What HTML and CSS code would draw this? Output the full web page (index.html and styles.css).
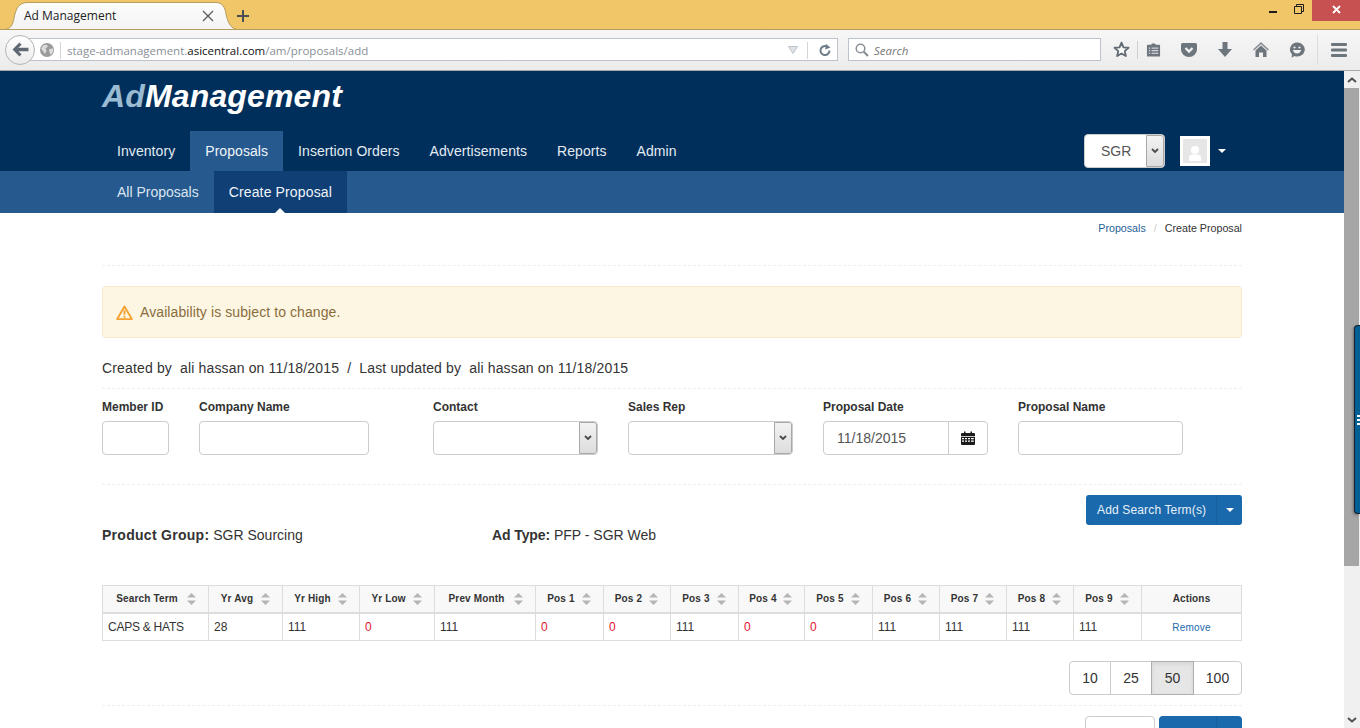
FILE: index.html
```html
<!DOCTYPE html>
<html lang="en">
<head>
<meta charset="utf-8">
<title>Ad Management</title>
<link rel="stylesheet" href="styles.css">
</head>
<body>
<div class="browser">
  <div class="tabstrip">
    <div class="tab">
      <svg class="tabshape" viewBox="0 0 236 30" width="236" height="30">
        <defs><linearGradient id="tabg" x1="0" y1="0" x2="0" y2="1"><stop offset="0" stop-color="#fdfdfd"/><stop offset="1" stop-color="#f3f3f3"/></linearGradient></defs>
        <path d="M0 29.500C7 29.500 9 24 10 18C12 8 15 2.500 24 2.500L212 2.500C218 2.500 221 7 222 14C224 24 228 29.500 234 29.500Z" fill="url(#tabg)" stroke="#b39c5e"/>
      </svg>
      <span class="tabtitle">Ad Management</span>
      <svg class="tabclose" viewBox="0 0 12 12" width="12" height="12"><path d="M1 1L11 11M11 1L1 11" stroke="#5a5a5a" stroke-width="1.300" fill="none"/></svg>
    </div>
    <svg class="newtab" viewBox="0 0 12 12" width="12" height="12"><path d="M6 0V12M0 6H12" stroke="#4a4f55" stroke-width="2" fill="none"/></svg>
    <div class="winctrls">
      <span class="winbtn winmin"><svg viewBox="0 0 8 2" width="8" height="2"><rect width="8" height="2" fill="#1d1d1d"/></svg></span>
      <span class="winbtn winrestore"><svg viewBox="0 0 10 10" width="10" height="10"><path d="M0.500 2.500H7.500V9.500H0.500ZM2.500 2.500V0.500H9.500V7.500H7.500" fill="none" stroke="#1d1d1d"/></svg></span>
      <span class="winbtn winclose"><svg viewBox="0 0 9 9" width="9" height="9"><path d="M1 1L8 8M8 1L1 8" stroke="#fff" stroke-width="1.800" fill="none"/></svg></span>
    </div>
  </div>
  <div class="toolbar">
    <span class="backbtn"><svg viewBox="0 0 16 14" width="17" height="15"><path d="M7 0.500L0.500 7L7 13.500L9 11.500L6 8.700H15.500V5.300H6L9 2.500Z" fill="#5f6973"/></svg></span>
    <div class="urlbar">
      <svg class="globe" viewBox="0 0 14 14" width="14" height="14"><circle cx="7" cy="7" r="7" fill="#9a9a9a"/><path d="M3 2.500L6.500 1.500L8 3.500L5.500 5.500L6.500 8L5 11L3 8L1.200 6ZM9 6L13 5.500L13 9L10.500 12L9.500 9Z" fill="#dcdcdc"/></svg>
      <span class="urltext">stage-admanagement.<b class="domain">asicentral.com</b>/am/proposals/add</span>
      <svg class="urldrop" viewBox="0 0 10 8" width="10" height="8"><path d="M0.500 0.500H9.500L5 7.500Z" fill="#dfe3e7" stroke="#bcc3ca"/></svg>
      <span class="reload"><svg viewBox="0 0 12 12" width="12" height="12"><path d="M10.500 6.500A4.500 4.500 0 1 1 7 2.200" fill="none" stroke="#6f7d8a" stroke-width="2"/><path d="M6.500 0V5.500L11.500 2.800Z" fill="#6f7d8a" transform="rotate(8 7 3)"/></svg></span>
    </div>
    <div class="searchbar">
      <svg viewBox="0 0 14 14" width="14" height="14"><circle cx="5.500" cy="5.500" r="4.300" fill="none" stroke="#8a8f95" stroke-width="1.500"/><path d="M8.800 8.800L13 13" stroke="#8a8f95" stroke-width="2.200"/></svg>
      <span class="searchtext">Search</span>
    </div>
    <span class="tool toolstar"><svg viewBox="0 0 18 18" width="17" height="17"><path d="M9 1.800L11.100 6.700L16.400 7.200L12.400 10.700L13.600 15.900L9 13.200L4.400 15.900L5.600 10.700L1.600 7.200L6.900 6.700Z" fill="#fafafa" stroke="#636c75" stroke-width="2" stroke-linejoin="round"/></svg></span>
    <span class="tool toolclip"><svg viewBox="0 0 16 16" width="15" height="16"><path d="M2 2.500H5.500L6.500 1H9.500L10.500 2.500H14Q15 2.500 15 3.500V14Q15 15 14 15H2Q1 15 1 14V3.500Q1 2.500 2 2.500Z" fill="#6d757d"/><path d="M3 6H4.500M6 6H13M3 8.700H4.500M6 8.700H13M3 11.400H4.500M6 11.400H13" stroke="#f2f2f2"/></svg></span>
    <span class="tool"><svg viewBox="0 0 16 14" width="16" height="14"><path d="M1.500 0H14.500Q16 0 16 1.500V6.500A8 7.500 0 0 1 0 6.500V1.500Q0 0 1.500 0Z" fill="#6d757d"/><path d="M4.500 5L8 8.500L11.500 5" fill="none" stroke="#f2f2f2" stroke-width="2.300"/></svg></span>
    <span class="tool"><svg viewBox="0 0 14 16" width="14" height="16"><path d="M4.500 0H9.500V7H14L7 15L0 7H4.500Z" fill="#6d757d"/></svg></span>
    <span class="tool"><svg viewBox="0 0 16 15" width="16" height="15"><path d="M8 0L16 7.500L14.800 8.500L8 2.200L1.200 8.500L0 7.500Z" fill="#8a9097"/><path d="M8 3.500L13.500 8.500V15H10V10.500H6V15H2.500V8.500Z" fill="#6d757d"/></svg></span>
    <span class="tool"><svg viewBox="0 0 16 16" width="16" height="16"><path d="M8 0.500A7.500 7 0 1 1 5.500 14L2.500 15.800L3 12.300A7.500 7 0 0 1 8 0.500Z" fill="#6d757d"/><circle cx="5.500" cy="5.500" r="1.100" fill="#f2f2f2"/><circle cx="10.500" cy="5.500" r="1.100" fill="#f2f2f2"/><path d="M3.800 8H12.200Q11 11.500 8 11.500Q5 11.500 3.800 8Z" fill="#f2f2f2"/></svg></span>
    <span class="tool toolmenu"><svg viewBox="0 0 16 14" width="16" height="14"><path d="M1 0H15Q16 0 16 1V2Q16 3 15 3H1Q0 3 0 2V1Q0 0 1 0ZM1 5.500H15Q16 5.500 16 6.500V7.500Q16 8.500 15 8.500H1Q0 8.500 0 7.500V6.500Q0 5.500 1 5.500ZM1 11H15Q16 11 16 12V13Q16 14 15 14H1Q0 14 0 13V12Q0 11 1 11Z" fill="#6d757d"/></svg></span>
  </div>
</div>

<div class="viewport">
  <div class="page">
    <header class="siteheader">
      <div class="container">
        <div class="logo"><span class="logo-ad">Ad</span>Management</div>
        <div class="navrow">
          <nav class="mainnav">
            <a class="navlink">Inventory</a>
            <a class="navlink navactive">Proposals</a>
            <a class="navlink">Insertion Orders</a>
            <a class="navlink">Advertisements</a>
            <a class="navlink">Reports</a>
            <a class="navlink">Admin</a>
          </nav>
          <div class="navright">
            <div class="select sgr"><span class="selval">SGR</span><span class="selarrow"><svg viewBox="0 0 8 6" width="8" height="6"><path d="M1 1L4 4L7 1" fill="none" stroke="#4a4a4a" stroke-width="1.800"/></svg></span></div>
            <span class="avatar"><svg viewBox="0 0 24 24" width="24" height="24"><rect width="24" height="24" fill="#e6e6e6"/><circle cx="12" cy="11" r="4" fill="#fff"/><path d="M6 22V18.500Q6 15.500 10 15.500H14Q18 15.500 18 18.500V22Z" fill="#fff"/></svg></span>
            <span class="caret"></span>
          </div>
        </div>
      </div>
    </header>
    <div class="subnavbar">
      <div class="container subnav">
        <a class="sublink">All Proposals</a>
        <a class="sublink subactive">Create Proposal</a>
      </div>
    </div>

    <main class="container">
      <div class="crumbs"><a class="link crumblink">Proposals</a><span class="crumbsep">/</span><span>Create Proposal</span></div>
      <div class="alert">
        <svg viewBox="0 0 18 16" width="17" height="15"><path d="M9 1.500L16.800 15H1.200Z" fill="none" stroke="#f5a232" stroke-width="2" stroke-linejoin="round"/><path d="M9 5.500V10.500M9 11.500V13.500" stroke="#f5a232" stroke-width="2"/></svg>
        <span>Availability is subject to change.</span>
      </div>
      <div class="created">Created by&nbsp; ali hassan on 11/18/2015 &nbsp;/&nbsp; Last updated by&nbsp; ali hassan on 11/18/2015</div>

      <div class="formrow">
        <div class="field f-member"><label class="lbl">Member ID</label><div class="input"></div></div>
        <div class="field f-company"><label class="lbl">Company Name</label><div class="input"></div></div>
        <div class="field f-std"><label class="lbl">Contact</label><div class="select"><span class="selval"></span><span class="selarrow"><svg viewBox="0 0 8 6" width="8" height="6"><path d="M1 1L4 4L7 1" fill="none" stroke="#4a4a4a" stroke-width="1.800"/></svg></span></div></div>
        <div class="field f-std"><label class="lbl">Sales Rep</label><div class="select"><span class="selval"></span><span class="selarrow"><svg viewBox="0 0 8 6" width="8" height="6"><path d="M1 1L4 4L7 1" fill="none" stroke="#4a4a4a" stroke-width="1.800"/></svg></span></div></div>
        <div class="field f-std"><label class="lbl">Proposal Date</label>
          <div class="dategroup"><span class="dateval">11/18/2015</span><span class="dateaddon"><svg viewBox="0 0 14 14" width="14" height="14"><path d="M0 3Q0 2 1 2H3V0.500H4.500V2H9.500V0.500H11V2H13Q14 2 14 3V5H0Z" fill="#1c1c1c"/><path d="M0 5.800H14V13Q14 14 13 14H1Q0 14 0 13ZM1 7V8.300H3V7ZM4 7V8.300H6V7ZM7 7V8.300H9V7ZM10 7V8.300H12.800V7ZM1 9.500V10.800H3V9.500ZM4 9.500V10.800H6V9.500ZM7 9.500V10.800H9V9.500ZM10 9.500V10.800H12.800V9.500Z" fill="#1c1c1c" fill-rule="evenodd"/></svg></span></div>
        </div>
        <div class="field f-std"><label class="lbl">Proposal Name</label><div class="input"></div></div>
      </div>

      <div class="actionrow">
        <div class="splitbtn"><span class="splitmain">Add Search Term(s)</span><span class="splitcaret"><span class="caret"></span></span></div>
      </div>
      <div class="inforow">
        <div class="info info-group"><b>Product Group:</b> SGR Sourcing</div>
        <div class="info info-type"><b>Ad Type:</b> PFP - SGR Web</div>
      </div>

      <table class="grid">
        <colgroup><col><col><col><col><col><col><col><col><col><col><col><col><col><col><col></colgroup>
        <thead>
          <tr>
            <th><div class="thi"><span>Search Term</span><svg class="sort" viewBox="0 0 9 12" width="9" height="12"><path d="M4.500 0L9 4.500H0ZM4.500 12L0 7.500H9Z" fill="#b5b5b5"/></svg></div></th>
            <th><div class="thi"><span>Yr Avg</span><svg class="sort" viewBox="0 0 9 12" width="9" height="12"><path d="M4.500 0L9 4.500H0ZM4.500 12L0 7.500H9Z" fill="#b5b5b5"/></svg></div></th>
            <th><div class="thi"><span>Yr High</span><svg class="sort" viewBox="0 0 9 12" width="9" height="12"><path d="M4.500 0L9 4.500H0ZM4.500 12L0 7.500H9Z" fill="#b5b5b5"/></svg></div></th>
            <th><div class="thi"><span>Yr Low</span><svg class="sort" viewBox="0 0 9 12" width="9" height="12"><path d="M4.500 0L9 4.500H0ZM4.500 12L0 7.500H9Z" fill="#b5b5b5"/></svg></div></th>
            <th><div class="thi"><span>Prev Month</span><svg class="sort" viewBox="0 0 9 12" width="9" height="12"><path d="M4.500 0L9 4.500H0ZM4.500 12L0 7.500H9Z" fill="#b5b5b5"/></svg></div></th>
            <th><div class="thi"><span>Pos 1</span><svg class="sort" viewBox="0 0 9 12" width="9" height="12"><path d="M4.500 0L9 4.500H0ZM4.500 12L0 7.500H9Z" fill="#b5b5b5"/></svg></div></th>
            <th><div class="thi"><span>Pos 2</span><svg class="sort" viewBox="0 0 9 12" width="9" height="12"><path d="M4.500 0L9 4.500H0ZM4.500 12L0 7.500H9Z" fill="#b5b5b5"/></svg></div></th>
            <th><div class="thi"><span>Pos 3</span><svg class="sort" viewBox="0 0 9 12" width="9" height="12"><path d="M4.500 0L9 4.500H0ZM4.500 12L0 7.500H9Z" fill="#b5b5b5"/></svg></div></th>
            <th><div class="thi"><span>Pos 4</span><svg class="sort" viewBox="0 0 9 12" width="9" height="12"><path d="M4.500 0L9 4.500H0ZM4.500 12L0 7.500H9Z" fill="#b5b5b5"/></svg></div></th>
            <th><div class="thi"><span>Pos 5</span><svg class="sort" viewBox="0 0 9 12" width="9" height="12"><path d="M4.500 0L9 4.500H0ZM4.500 12L0 7.500H9Z" fill="#b5b5b5"/></svg></div></th>
            <th><div class="thi"><span>Pos 6</span><svg class="sort" viewBox="0 0 9 12" width="9" height="12"><path d="M4.500 0L9 4.500H0ZM4.500 12L0 7.500H9Z" fill="#b5b5b5"/></svg></div></th>
            <th><div class="thi"><span>Pos 7</span><svg class="sort" viewBox="0 0 9 12" width="9" height="12"><path d="M4.500 0L9 4.500H0ZM4.500 12L0 7.500H9Z" fill="#b5b5b5"/></svg></div></th>
            <th><div class="thi"><span>Pos 8</span><svg class="sort" viewBox="0 0 9 12" width="9" height="12"><path d="M4.500 0L9 4.500H0ZM4.500 12L0 7.500H9Z" fill="#b5b5b5"/></svg></div></th>
            <th><div class="thi"><span>Pos 9</span><svg class="sort" viewBox="0 0 9 12" width="9" height="12"><path d="M4.500 0L9 4.500H0ZM4.500 12L0 7.500H9Z" fill="#b5b5b5"/></svg></div></th>
            <th class="thactions">Actions</th>
          </tr>
        </thead>
        <tbody>
          <tr>
            <td class="tdterm">CAPS &amp; HATS</td><td>28</td><td>111</td><td class="zero">0</td><td>111</td><td class="zero">0</td><td class="zero">0</td><td>111</td><td class="zero">0</td><td class="zero">0</td><td>111</td><td>111</td><td>111</td><td>111</td><td class="tdaction"><a class="link">Remove</a></td>
          </tr>
        </tbody>
      </table>

      <div class="pagerrow">
        <div class="pager"><span class="pg pg10">10</span><span class="pg pg25">25</span><span class="pg pg50 pgactive">50</span><span class="pg pg100">100</span></div>
      </div>
      <div class="footbtns">
        <span class="btnwhite"></span>
        <span class="btnblue"><span class="btnbluemain"></span><span class="btnbluecaret"></span></span>
      </div>
    </main>
  </div>
  <aside class="scrollbar">
    <svg viewBox="0 0 10 6" width="10" height="6"><path d="M1 5L5 1.500L9 5" fill="none" stroke="#505050" stroke-width="2"/></svg>
    <span class="thumb"></span>
    <span class="track"></span>
    <svg viewBox="0 0 10 6" width="10" height="6"><path d="M1 1L5 4.500L9 1" fill="none" stroke="#505050" stroke-width="2"/></svg>
  </aside>
  <div class="sidehandle"><span></span><span></span><span></span></div>
</div>
</body>
</html>
```
FILE: styles.css
```css
* { box-sizing: border-box; }
html, body { margin: 0; height: 728px; overflow: hidden; background: #fff; }
body { font-family: "Liberation Sans", Arial, sans-serif; font-size: 14px; color: #333; }
a { color: inherit; text-decoration: none; }

/* browser chrome */
.tabstrip { height: 30px; background: #f0c668; display: flex; align-items: flex-start; box-shadow: inset 0 -1px 0 #b39c5e; }
.tab { position: relative; margin-left: 4px; width: 232px; height: 30px; display: flex; align-items: center; padding: 1px 22px 0 20px; font-family: "Open Sans", sans-serif; font-size: 12px; color: #222; }
.tabshape { position: absolute; left: 0; top: 0; }
.tabtitle { position: relative; flex: 1; }
.tabclose { position: relative; }
.newtab { margin: 10px 0 0 1px; }
.winctrls { margin-left: auto; display: flex; height: 21px; }
.winbtn { display: flex; align-items: center; justify-content: center; width: 24px; height: 21px; }
.winmin { width: 26px; padding: 3px 6px 0 0; }
.winrestore { padding: 0 4px 4px 0; }
.winclose { width: 48px; background: #c75050; margin-left: -1px; padding-bottom: 3px; }
.toolbar { height: 41px; display: flex; align-items: center; padding-left: 5px; background: linear-gradient(#f6f6f6, #ececec); border-bottom: 1px solid #a9a9a9; }
.backbtn { position: relative; z-index: 1; flex: none; width: 30px; height: 30px; border-radius: 50%; border: 1px solid #b4b4b4; background: linear-gradient(#fff, #ebebeb); display: flex; align-items: center; justify-content: center; margin-top: -1px; }
.urlbar { flex: none; margin-left: -15px; width: 818px; height: 23px; margin-top: -1px; background: #fff; border: 1px solid #bcc3cb; border-left: 0; display: flex; align-items: center; padding: 1px 0 0 20px; font-family: "Open Sans", sans-serif; font-size: 11.500px; color: #8a8f97; }
.globe { flex: none; }
.urltext { margin-left: 6px; padding-left: 6px; border-left: 1px solid #d5d5d5; line-height: 17px; white-space: nowrap; flex: 1; }
.domain { font-weight: 400; color: #111; }
.urldrop { flex: none; margin-right: 9px; }
.reload { flex: none; width: 30px; height: 17px; padding-left: 4px; border-left: 1px solid #d5d5d5; display: flex; align-items: center; justify-content: center; }
.searchbar { flex: none; margin-left: 10px; width: 253px; height: 23px; margin-top: -1px; background: #fff; border: 1px solid #bcc3cb; display: flex; align-items: center; gap: 5px; padding: 1px 0 0 6px; }
.searchtext { font-family: "Open Sans", sans-serif; font-style: italic; font-size: 11.500px; color: #777; }
.tool { flex: none; width: 36px; height: 30px; display: flex; align-items: center; justify-content: center; margin-top: -1px; }
.toolstar { width: 28px; margin-left: 6px; }
.toolclip { background: linear-gradient(#d0d0d0, #d0d0d0) 2px center / 1px 18px no-repeat; }
.toolmenu { width: 45px; padding-left: 3px; background: linear-gradient(#dcdcdc, #dcdcdc) 2px center / 1px 34px no-repeat; }

/* viewport */
.viewport { display: flex; height: 657px; overflow: hidden; position: relative; }
.page { width: 1344px; flex: none; height: 657px; overflow: hidden; }
.container { width: 1140px; margin: 0 auto; }
.siteheader { background: #012f5b; height: 100px; }
.logo { height: 60px; padding-top: 6px; font-size: 32px; line-height: 38px; font-weight: bold; font-style: italic; letter-spacing: 0.15px; color: #fff; }
.logo-ad { color: #9abbd2; }
.navrow { display: flex; justify-content: space-between; align-items: center; height: 40px; }
.mainnav { display: flex; }
.navlink { display: block; padding: 0 15px; line-height: 40px; letter-spacing: 0.07px; color: #e3ebf3; }
.navactive { background: #265a8f; color: #f0f4f8; }
.navright { display: flex; align-items: center; padding-right: 16px; }
.select { display: flex; background: #fff; border: 1px solid #ccc; border-radius: 4px; height: 34px; overflow: hidden; }
.selval { flex: 1; padding-left: 16px; line-height: 32px; color: #555; }
.selarrow { flex: none; width: 18px; display: flex; align-items: center; justify-content: center; background: linear-gradient(#f3f3f3, #dcdcdc); border: 1px solid #a8a8a8; border-radius: 0 3px 3px 0; }
.sgr { width: 81px; }
.avatar { margin-left: 15px; width: 30px; height: 30px; background: #fff; display: flex; align-items: center; justify-content: center; }
.caret { display: inline-block; width: 0; height: 0; border-style: solid; border-width: 4px 4px 0; border-color: #fff transparent transparent; }
.navright .caret { margin-left: 8px; }
.subnavbar { background: #265a8f; height: 42px; }
.subnav { display: flex; }
.sublink { display: block; padding: 0 15px; line-height: 42px; color: #dbe5ef; position: relative; }
.subactive { background: #0f3f75; color: #f0f4f8; letter-spacing: 0.14px; }
.subactive::after { content: ""; position: absolute; left: 50%; bottom: 0; margin-left: -5px; border-style: solid; border-width: 0 5px 5px; border-color: transparent transparent #fff; }

/* main */
.crumbs { height: 53px; padding-top: 8px; text-align: right; font-size: 10.700px; line-height: 15px; border-bottom: 1px dashed #eee; }
.link { color: #1a69ad; }
.crumblink { color: #1f5f96; }
.crumbsep { color: #ccc; margin: 0 8px; }
.alert { margin-top: 20px; height: 52px; background: #fdf6e3; border: 1px solid #f8ebcc; border-radius: 4px; display: flex; align-items: center; gap: 7px; padding-left: 13px; color: #8a6d3b; letter-spacing: 0.09px; }
.created { margin-top: 20px; height: 31px; line-height: 20px; letter-spacing: 0.15px; border-bottom: 1px dashed #eee; }
.formrow { display: flex; gap: 30px; padding-top: 11px; height: 96px; border-bottom: 1px dashed #eee; }
.field { flex: none; display: flex; flex-direction: column; }
.f-member { width: 67px; }
.f-company { width: 204px; }
.f-company .input { width: 170px; }
.f-std { width: 165px; }
.lbl { font-size: 12px; font-weight: bold; line-height: 15px; height: 21px; }
.input { height: 34px; border: 1px solid #ccc; border-radius: 4px; background: #fff; }
.dategroup { display: flex; height: 34px; border: 1px solid #ccc; border-radius: 4px; }
.dateval { flex: 1; padding-left: 13px; line-height: 32px; color: #555; }
.dateaddon { flex: none; width: 39px; border-left: 1px solid #ccc; display: flex; align-items: center; justify-content: center; }
.actionrow { display: flex; justify-content: flex-end; padding-top: 10px; }
.splitbtn { display: flex; height: 30px; background: #1a69ad; border-radius: 3px; color: #e8f0f7; font-size: 12px; }
.splitmain { padding: 0 11px; line-height: 30px; width: 130px; white-space: nowrap; letter-spacing: 0.15px; }
.splitcaret { width: 26px; border-left: 1px solid #175f9d; display: flex; align-items: center; justify-content: center; }
.inforow { display: flex; height: 60px; line-height: 20px; }
.info-group { width: 390px; }
.info-group b { letter-spacing: 0.28px; }
.info-type b { letter-spacing: -0.1px; }
.grid { width: 1139px; table-layout: fixed; border-collapse: collapse; }
.grid col:nth-child(1) { width: 106px; }
.grid col:nth-child(2) { width: 74px; }
.grid col:nth-child(3) { width: 77px; }
.grid col:nth-child(4) { width: 75px; }
.grid col:nth-child(5) { width: 101px; }
.grid col:nth-child(6) { width: 68px; }
.grid col:nth-child(7) { width: 67px; }
.grid col:nth-child(8) { width: 68px; }
.grid col:nth-child(9) { width: 66px; }
.grid col:nth-child(10) { width: 68px; }
.grid col:nth-child(11) { width: 67px; }
.grid col:nth-child(12) { width: 67px; }
.grid col:nth-child(13) { width: 67px; }
.grid col:nth-child(14) { width: 68px; }
.grid col:nth-child(15) { width: 100px; }
.grid th { height: 27px; padding: 0; background: #f8f8f8; border: 1px solid #ddd; border-bottom-width: 2px; font-size: 10px; letter-spacing: 0.15px; font-weight: bold; text-align: center; color: #333; }
.thi { display: flex; align-items: center; padding-left: 4px; }
.thi span { flex: 1; white-space: nowrap; text-align: center; }
.sort { flex: none; margin-right: 12px; }
.grid td { height: 28px; padding: 0 5px; border: 1px solid #ddd; font-size: 12px; }
.grid td.tdterm { letter-spacing: -0.25px; }
.grid td.zero { color: #e8112d; }
.grid td.tdaction { text-align: center; font-size: 10px; padding-top: 1px; letter-spacing: 0.2px; }
.pagerrow { display: flex; justify-content: flex-end; padding-top: 20px; height: 65px; border-bottom: 1px dashed #eee; }
.pager { display: flex; height: 34px; }
.pg { display: block; height: 34px; line-height: 32px; text-align: center; border: 1px solid #ccc; margin-left: -1px; color: #333; }
.pg10 { width: 42px; border-radius: 4px 0 0 4px; margin-left: 0; }
.pg25 { width: 42px; }
.pg50 { width: 43px; }
.pg100 { width: 49px; border-radius: 0 4px 4px 0; }
.pgactive { position: relative; background: #e6e6e6; border-color: #adadad; box-shadow: inset 0 2px 4px rgba(0,0,0,.08); }
.footbtns { display: flex; justify-content: flex-end; gap: 4px; padding-top: 10px; }
.btnwhite { width: 70px; height: 34px; border: 1px solid #ccc; border-radius: 4px; }
.btnblue { display: flex; width: 83px; height: 34px; background: #1a69ad; border-radius: 4px; }
.btnbluemain { flex: 1; }
.btnbluecaret { width: 26px; border-left: 1px solid #175f9d; }

/* scrollbar */
.scrollbar { flex: none; width: 16px; height: 657px; background: #f0f0f0; display: flex; flex-direction: column; align-items: center; padding: 6px 0 5px; }
.thumb { flex: none; width: 15px; height: 478px; margin: 5px 1px 0 0; background: #a6a6a6; }
.track { flex: 1; }
.sidehandle { position: absolute; right: 0; top: 254px; width: 6px; height: 189px; background: #005f95; border: 1px solid #14212c; border-right: 0; border-radius: 4px 0 0 4px; box-shadow: -1px 1px 3px rgba(0,0,0,.35); display: flex; flex-direction: column; justify-content: center; align-items: flex-end; gap: 2px; }
.sidehandle span { display: block; width: 3px; height: 2px; background: #fff; }
```
